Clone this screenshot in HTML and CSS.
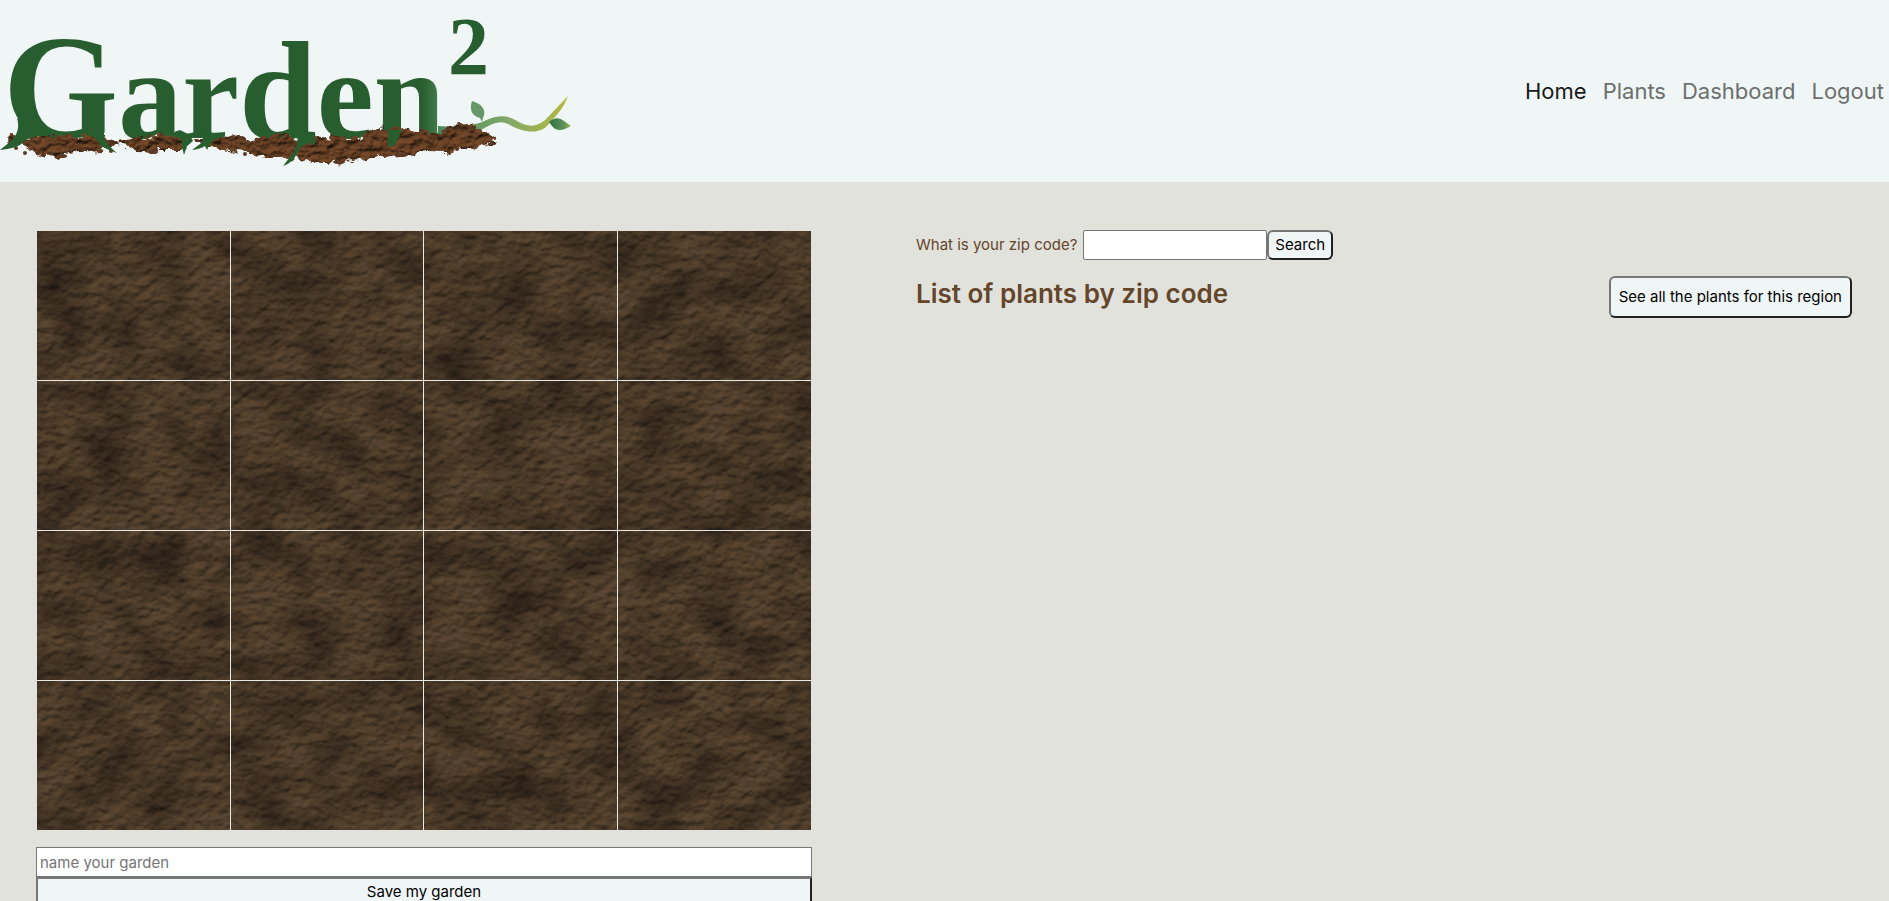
FILE: index.html
```html
<!DOCTYPE html>
<html lang="en">
<head>
<meta charset="utf-8">
<meta name="viewport" content="width=device-width, initial-scale=1">
<title>Garden²</title>
<link rel="stylesheet" href="styles.css">
</head>
<body>
<header class="header">
  <a class="brand" href="#" aria-label="Garden squared">
    <svg class="logo" viewBox="0 0 572 182" aria-hidden="true">
      <defs>
        <linearGradient id="stem" gradientUnits="userSpaceOnUse" x1="422" y1="0" x2="448" y2="0">
          <stop offset="0" stop-color="#275d2f"/><stop offset="1" stop-color="#568f60"/>
        </linearGradient>
        <linearGradient id="vine" gradientUnits="userSpaceOnUse" x1="445" y1="0" x2="568" y2="0">
          <stop offset="0" stop-color="#4f8a5c"/><stop offset=".5" stop-color="#7fa867"/><stop offset=".8" stop-color="#a3b350"/><stop offset="1" stop-color="#b3b940"/>
        </linearGradient>
        <linearGradient id="leaf"><stop offset="0" stop-color="#2f6f43"/><stop offset=".7" stop-color="#5f955a"/><stop offset="1" stop-color="#b0b548"/></linearGradient>
        <filter id="soil" x="-5%" y="-30%" width="110%" height="160%" color-interpolation-filters="sRGB">
          <feTurbulence type="fractalNoise" baseFrequency=".11 .14" numOctaves="3" seed="8" result="n"/>
          <feDisplacementMap in="SourceGraphic" in2="n" scale="13" xChannelSelector="R" yChannelSelector="G" result="shape"/>
          <feDiffuseLighting in="n" surfaceScale="3" diffuseConstant="1.1" lighting-color="#6c4326" result="lit">
            <feDistantLight azimuth="250" elevation="56"/>
          </feDiffuseLighting>
          <feComposite in="lit" in2="shape" operator="in"/>
        </filter>
      </defs>
      <path fill="url(#vine)" d="M438 126C460 128 475 126 489 119C499 115 508 115 517 121C530 129 540 126 548 117L568 96C564 108 555 117 547 126C538 135 522 132 510 125C500 119 492 124 481 130C470 136 453 135 438 134Z"/>
      <path fill="#659767" d="M472 101C482 104 487 110 483 118L482 122L480 118C472 116 469 110 472 101Z"/>
      <path fill="url(#leaf)" d="M549 122Q557 115 564 121L571 126Q558 134 552 126Z"/>
      <g class="wordmark">
        <text x="3" y="138"><tspan class="initial">G</tspan>ar<tspan class="tall">d</tspan>e<tspan fill="url(#stem)">n</tspan></text>
        <text class="power" x="448" y="74">2</text>
      </g>
      <g fill="#70452a" filter="url(#soil)">
        <path d="M3 139L14 133L26 139L40 134L50 134L68 136L84 136L104 135L119 143L100 151L78 153L62 156L44 157L30 152L24 147L8 143Z"/>
        <path d="M119 142L132 137L148 137L160 134L178 137L190 141L181 150L157 150L149 153L133 151Z"/>
        <path d="M194 139L203 135L218 140L238 135L252 140L271 135L287 135L309 141L324 136L350 138L362 136L374 128L390 129L402 128L420 131L438 133L450 126L466 125L484 131L498 140L482 147L460 149L444 153L426 152L402 155L380 156L360 160L344 162L325 163L309 160L290 158L272 158L250 153L232 150L212 148Z"/>
      </g>
      <g fill="#5c3a25">
        <circle cx="16" cy="148" r="2"/><circle cx="25" cy="153" r="2"/><ellipse cx="62" cy="156" rx="5" ry="2"/><circle cx="111" cy="151" r="2"/><ellipse cx="153" cy="152" rx="5" ry="2"/><circle cx="245" cy="154" r="2"/><ellipse cx="339" cy="162" rx="6" ry="2"/><ellipse cx="401" cy="155" rx="7" ry="2"/><circle cx="457" cy="149" r="2"/><circle cx="492" cy="143" r="2"/>
      </g>
      <g fill="#275d2f">
        <path d="M17 118C22 135 10 142 0 150Q12 149 20 145Q30 134 48 136L50 132Z"/>
        <path d="M88 134Q98 139 101 146Q108 150 117 153Q109 147 104 138L104 130Z"/>
        <path d="M174 132Q183 137 182 147L184 155L187 146L193 141L190 135L180 130Z"/>
        <path d="M200 134Q206 140 200 144L192 150Q200 149 205 146L207 150Q211 140 219 138L225 136V132Z"/>
        <path d="M297 131Q300 146 290 157L283 166Q293 163 297 153Q305 139 315 145V132Z"/>
        <path d="M388 130L388 146Q394 149 397 141L402 130Z"/>
      </g>
    </svg>
  </a>
  <nav class="nav" aria-label="Main">
    <a class="nav-link active" href="#" aria-current="page">Home</a>
    <a class="nav-link" href="#">Plants</a>
    <a class="nav-link" href="#">Dashboard</a>
    <a class="nav-link" href="#">Logout</a>
  </nav>
</header>
<main class="dashboard">
  <section class="garden" aria-label="Garden">
    <div class="plot">
      <svg class="dirt" aria-hidden="true">
        <filter id="earth" x="0" y="0" width="100%" height="100%" color-interpolation-filters="sRGB">
          <feTurbulence type="fractalNoise" baseFrequency=".11 .14" numOctaves="3" seed="12" result="grain"/>
          <feDiffuseLighting in="grain" surfaceScale="2" diffuseConstant="1.1" lighting-color="#564330" result="relief">
            <feDistantLight azimuth="250" elevation="60"/>
          </feDiffuseLighting>
          <feTurbulence type="fractalNoise" baseFrequency=".02 .026" numOctaves="5" seed="31"/>
          <feColorMatrix values=".9 0 0 0 .43  .9 0 0 0 .42  .8 0 0 0 .44  0 0 0 0 1" result="patches"/>
          <feComposite in="relief" in2="patches" operator="arithmetic" k1="1" result="ground"/>
          <feConvolveMatrix in="ground" order="3" kernelMatrix="1 2 1 2 4 2 1 2 1" edgeMode="duplicate" preserveAlpha="true"/>
        </filter>
        <rect width="100%" height="100%" filter="url(#earth)"/>
      </svg>
      <div class="tile"></div><div class="tile"></div><div class="tile"></div><div class="tile"></div>
      <div class="tile"></div><div class="tile"></div><div class="tile"></div><div class="tile"></div>
      <div class="tile"></div><div class="tile"></div><div class="tile"></div><div class="tile"></div>
      <div class="tile"></div><div class="tile"></div><div class="tile"></div><div class="tile"></div>
    </div>
    <form class="save-form">
      <input class="field" type="text" placeholder="name your garden" aria-label="Garden name">
      <button class="save" type="button">Save my garden</button>
    </form>
  </section>
  <section class="plants">
    <form class="search-form">
      <label for="zip">What is your zip code?</label>
      <input class="field zip" id="zip" type="text">
      <button class="button" type="button">Search</button>
    </form>
    <div class="list-head">
      <h1 class="title">List of plants by zip code</h1>
      <button class="button region" type="button">See all the plants for this region</button>
    </div>
  </section>
</main>
</body>
</html>
```
FILE: styles.css
```css
* { box-sizing: border-box; }

body {
  margin: 0;
  min-height: 100vh;
  overflow-x: hidden;
  background: #e1e2dc;
  color: #65462a;
  font: 15px/24px Inter, "Liberation Sans", sans-serif;
}

button, input { font: inherit; }

.header {
  display: flex;
  align-items: center;
  justify-content: space-between;
  background: #f0f6f5;
}

.brand, .logo { display: block; }
.logo { width: 572px; height: 182px; }

.wordmark {
  fill: #275d2f;
  font: bold 128px "Liberation Serif", serif;
}
.initial { font-size: 148px; }
.tall { font-size: 140px; }
.power { font-size: 82px; }

.nav {
  display: flex;
  gap: 16px;
  padding-right: 5px;
  font-size: 22px;
  line-height: 36px;
}
.nav-link { color: #6c6f6e; text-decoration: none; }
.nav-link.active { color: #181919; }

.dashboard {
  display: grid;
  grid-template-columns: 776fr 936fr;
  gap: 104px;
  padding: 48px 37px 0 36px;
}

.plot {
  position: relative;
  display: grid;
  grid-template-columns: repeat(4, 1fr);
  margin: 1px 1px 17px;
}
.dirt {
  position: absolute;
  inset: 0;
  width: 100%;
  height: 100%;
}
.tile {
  position: relative;
  height: 150px;
  border: solid #e8e8e5;
  border-width: 0 1px 1px 0;
}
.tile:nth-of-type(4n) { border-right: 0; }
.tile:nth-of-type(n+13) { height: 149px; border-bottom: 0; }

.field {
  height: 30px;
  padding: 1px 3px;
  border: 1px solid #767676;
  border-radius: 0;
  background: #fff;
}
.field::placeholder { color: #757575; opacity: 1; }

.save-form { display: flex; flex-direction: column; }
.save {
  height: 30px;
  padding: 0 6px;
  border: 2px solid;
  border-color: #767676 #1f201f #1f201f #767676;
  background: #f0f6f5;
  color: #000;
}

.search-form { display: flex; align-items: center; }
.zip { width: 184px; margin-left: 6px; border-radius: 2px; }
.button {
  height: 30px;
  padding: 0 6px;
  border: 2px solid;
  border-color: #767676 #1f201f #1f201f #767676;
  border-radius: 6px;
  background: #f0f6f5;
  color: #000;
}

.list-head {
  display: flex;
  align-items: flex-start;
  justify-content: space-between;
  margin-top: 16px;
}
.title {
  margin: 0;
  font-size: 26px;
  font-weight: 600;
  line-height: 36px;
}
.region { height: 42px; padding: 0 8px; }
```
